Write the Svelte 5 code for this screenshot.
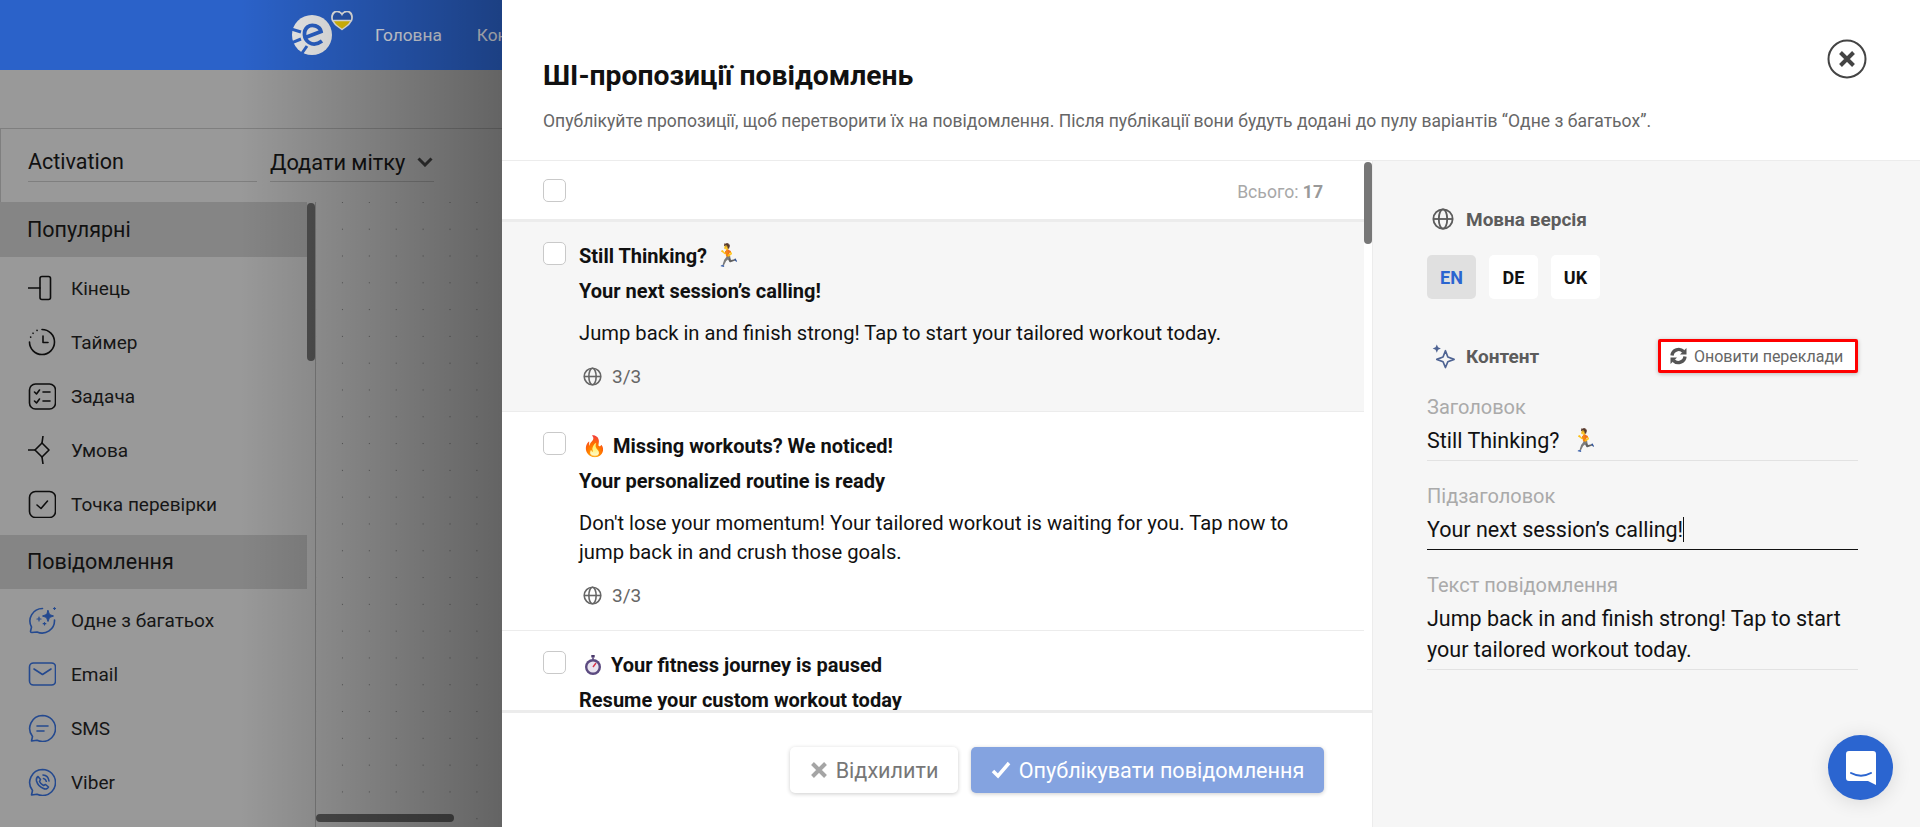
<script>
	const popular = [
		{ icon: 'end', label: 'Кінець' },
		{ icon: 'timer', label: 'Таймер' },
		{ icon: 'task', label: 'Задача' },
		{ icon: 'cond', label: 'Умова' },
		{ icon: 'check', label: 'Точка перевірки' }
	];
	const messages = [
		{ icon: 'ai', label: 'Одне з багатьох' },
		{ icon: 'mail', label: 'Email' },
		{ icon: 'sms', label: 'SMS' },
		{ icon: 'viber', label: 'Viber' },
		{ icon: 'push', label: '' }
	];
	const suggestions = [
		{
			title: 'Still Thinking?',
			after: '🏃',
			sub: 'Your next session’s calling!',
			body: 'Jump back in and finish strong! Tap to start your tailored workout today.',
			active: true
		},
		{
			before: '🔥',
			title: 'Missing workouts? We noticed!',
			sub: 'Your personalized routine is ready',
			body: "Don't lose your momentum! Your tailored workout is waiting for you. Tap now to jump back in and crush those goals."
		},
		{
			stopwatch: true,
			title: 'Your fitness journey is paused',
			sub: 'Resume your custom workout today',
			body: 'Pick up where you left off.'
		}
	];
</script>

{#snippet globe(size)}
	<svg width={size} height={size} viewBox="0 0 24 24" fill="none" stroke="currentColor" stroke-width="2">
		<circle cx="12" cy="12" r="10.5" />
		<ellipse cx="12" cy="12" rx="4.6" ry="10.5" />
		<path d="M1.5 12h21" />
	</svg>
{/snippet}

{#snippet navIcon(name)}
	<svg class="nav-icon" class:blue={['ai', 'mail', 'sms', 'viber', 'push'].includes(name)} viewBox="0 0 28 28" fill="none" stroke="currentColor" stroke-width="1.6" stroke-linecap="round" stroke-linejoin="round">
		{#if name === 'end'}
			<path d="M0 14h12" />
			<rect x="12" y="2.5" width="10.5" height="23" rx="2" />
		{:else if name === 'timer'}
			<path d="M14 1.5a12.5 12.5 0 1 1-12.5 12.5" />
			<path d="M5 5.2l.1.1M2.6 9l.1.1M9 2.4l.1.1" />
			<path d="M15 8v6.5h5" />
		{:else if name === 'task'}
			<rect x="1.5" y="2" width="26" height="25" rx="6" />
			<path d="M6.500 10l2 2 3-4M15 10h7M6.500 19l2 2 3-4M15 19h7" />
		{:else if name === 'cond'}
			<path d="M0 14h7M15 0l-1 7M15 28l-1-7" />
			<path d="M14 7l7 7-7 7-7-7z" />
		{:else if name === 'check'}
			<rect x="1.500" y="1.500" width="26" height="26" rx="6" />
			<path d="M9 15l4 3.500 6.500-7.500" />
		{:else if name === 'ai'}
			<path d="M14.500 2.500A12.500 12.500 0 0 0 3.500 21l-1 4.500c0 .8.500 1 1.200 1L9 26A12.500 12.500 0 0 0 26.500 14" />
			<path d="M20 4.500l1.500 4 4 1.500-4 1.500-1.500 4-1.500-4-4-1.500 4-1.500z" fill="currentColor" stroke-width="1" />
			<path d="M11 11v4M9 13h4M16.500 16.500v2.500M15.200 17.700h2.600M26.500 1.500v2M25.500 2.500h2" stroke-width="1.200" />
		{:else if name === 'mail'}
			<rect x="1.500" y="3" width="26" height="22" rx="4" />
			<path d="M6 9l8.500 5.500L23 9" />
		{:else if name === 'sms'}
			<path d="M14.500 1.500a13 13 0 0 1 0 26c-2 0-3.800-.4-5.500-1.200l-5.500.7 1-4.500A13 13 0 0 1 14.500 1.500z" />
			<path d="M9 12h11M9 17h7" />
		{:else if name === 'viber'}
			<path d="M14.500 1.500a13 13 0 0 1 0 26c-2 0-3.800-.4-5.500-1.200l-5.500.7 1-4.500A13 13 0 0 1 14.500 1.500z" />
			<path d="M10 8.500l2.500 3-1 2c.8 1.800 2.200 3.200 4 4l2-1 3 2.500c-1 2-3 2.500-5 1.500-3.500-1.500-6-4-7-7.500-.4-2 .3-3.600 1.500-4.500z" />
			<path d="M15 7c3 .2 5.500 2.600 6 6M15.500 10.500c1.500.3 2.500 1.300 2.800 2.800" />
		{:else}
			<path d="M2 27v-8a5 5 0 0 1 5-5h13a5 5 0 0 1 5 5v8" />
		{/if}
	</svg>
{/snippet}

<div class="page">
	<aside class="backdrop">
		<header class="topbar">
			<svg class="logo" width="64" height="48" viewBox="0 0 64 48">
				<circle cx="21" cy="24" r="20" fill="#eee" />
				<path d="M0 18l10 3M0 32l10-4M9 45l7-10" fill="none" stroke="#2b62c9" stroke-width="3" />
				<path d="M13 27L30 20.500C29 15 21 12.500 16.500 16C12 20 12.500 28 18 31.500C22 34 27 33 31 30" fill="none" stroke="#2b62c9" stroke-width="3.800" />
				<g transform="translate(0 -1.500)">
					<path d="M51 20c-6-4-10-7-10-12.500 0-3.500 2-5.500 5-5.500 2 0 4 1 5 3 1-2 3-3 5-3 3 0 5 2 5 5.500C61 13 57 16 51 20z" fill="#e4c40a" stroke="#eee" stroke-width="1.500" />
					<path d="M41.500 11c-1.500-5 1.500-9 4.500-9 2 0 4 1 5 3 1-2 3-3 5-3 3 0 6 4 4.500 9z" fill="#2a59b4" stroke="#eee" stroke-width="1.500" />
				</g>
			</svg>
			<nav class="topnav">
				<span>Головна</span>
				<span>Контакти</span>
			</nav>
		</header>

		<div class="spacer"></div>

		<div class="name-row">
			<div class="name-field">Activation</div>
			<div class="tag-field">
				Додати мітку
				<svg width="16" height="10" viewBox="0 0 16 10" fill="none" stroke="#333" stroke-width="3"><path d="M1.500 1.500L8 8l6.500-6.500" /></svg>
			</div>
		</div>

		<div class="workspace">
			<div class="palette">
				<div class="group-title">Популярні</div>
				{#each popular as item}
					<div class="palette-item">
						{@render navIcon(item.icon)}
						<span>{item.label}</span>
					</div>
				{/each}
				<div class="group-title second">Повідомлення</div>
				{#each messages as item}
					<div class="palette-item">
						{@render navIcon(item.icon)}
						<span>{item.label}</span>
					</div>
				{/each}
			</div>
			<div class="palette-scroll"><div class="thumb"></div></div>
			<div class="canvas"><div class="hscroll"></div></div>
		</div>
	</aside>

	<section class="modal">
		<div class="modal-head">
			<h1>ШІ-пропозиції повідомлень</h1>
			<p>Опублікуйте пропозиції, щоб перетворити їх на повідомлення. Після публікації вони будуть додані до пулу варіантів “Одне з багатьох”.</p>
			<button class="close" aria-label="Закрити">
				<svg width="40" height="40" viewBox="0 0 40 40" fill="none" stroke="#444">
					<circle cx="20" cy="20" r="18.500" stroke-width="2" />
					<path d="M13.500 13.500l13 13M26.500 13.500l-13 13" stroke-width="4" />
				</svg>
			</button>
		</div>

		<div class="modal-body">
			<div class="left">
				<div class="list-wrap">
					<div class="list">
						<div class="toolbar">
							<span class="box"></span>
							<span class="total">Всього: <b>17</b></span>
						</div>
						{#each suggestions as s}
							<article class="item" class:active={s.active}>
								<span class="box"></span>
								<div class="item-text">
									<div class="item-title">
										{#if s.before}<span class="emoji before">{s.before}</span>{/if}
										{#if s.stopwatch}
											<svg class="stopwatch" width="16" height="20" viewBox="0 0 16 20">
												<rect x="6.300" y="0" width="3.400" height="2.500" fill="#4b3a6b" />
												<rect x="7" y="2" width="2" height="2.500" fill="#7a6a96" />
												<circle cx="8" cy="12" r="8" fill="#5b4a80" />
												<circle cx="8" cy="12" r="5.600" fill="#e9e4ef" />
												<path d="M8 12l3-4" stroke="#d8344a" stroke-width="1.400" />
											</svg>
										{/if}
										{s.title}
										{#if s.after}<span class="emoji after">{s.after}</span>{/if}
									</div>
									<div class="item-sub">{s.sub}</div>
									<div class="item-body">{s.body}</div>
									<div class="item-meta">
										{@render globe(19)}
										<span>3/3</span>
									</div>
								</div>
							</article>
						{/each}
					</div>
					<div class="list-thumb"></div>
				</div>
				<footer class="actions">
					<button class="btn reject">
						<svg width="18" height="18" viewBox="0 0 18 18" stroke="#a5a5a5" stroke-width="4"><path d="M2.500 2.500l13 13M15.500 2.500l-13 13" /></svg>
						Відхилити
					</button>
					<button class="btn publish">
						<svg width="20" height="18" viewBox="0 0 20 18" fill="none" stroke="#fff" stroke-width="3.500"><path d="M2 10l5 5L18 2" /></svg>
						Опублікувати повідомлення
					</button>
				</footer>
			</div>

			<div class="right">
				<div class="section-title lang-title">
					{@render globe(22)}
					<span>Мовна версія</span>
				</div>
				<div class="langs">
					<span class="lang current">EN</span>
					<span class="lang">DE</span>
					<span class="lang">UK</span>
				</div>
				<div class="content-row">
					<div class="section-title">
						<svg class="spark" width="24" height="26" viewBox="0 0 25 26" fill="none" stroke="#4f6493" stroke-width="1.800" stroke-linejoin="round">
							<path d="M14 7.500l2.500 6.500 6.500 2.500-6.500 2.500L14 25l-2.500-6-6.500-2.500 6.500-2.500z" />
							<path d="M5 1l1.300 3 3 1.300-3 1.300L5 9.500 3.700 6.600l-3-1.300 3-1.300z" fill="#4f6493" stroke="none" />
						</svg>
						<span>Контент</span>
					</div>
					<button class="refresh">
						<svg width="17" height="18" viewBox="0 0 17 18" fill="#555">
							<path d="M2 8.500A6.700 6.700 0 0 1 13.500 4.500" fill="none" stroke="#555" stroke-width="3.400" />
							<path d="M15 9.500A6.700 6.700 0 0 1 3.500 13.500" fill="none" stroke="#555" stroke-width="3.400" />
							<path d="M16.500 1v6.500H10z" />
							<path d="M.5 17v-6.500H7z" />
						</svg>
						Оновити переклади
					</button>
				</div>
				<div class="field">
					<div class="field-label">Заголовок</div>
					<div class="field-value">Still Thinking? <span class="emoji after">🏃</span></div>
				</div>
				<div class="field focused">
					<div class="field-label">Підзаголовок</div>
					<div class="field-value">Your next session’s calling!<i class="caret"></i></div>
				</div>
				<div class="field">
					<div class="field-label">Текст повідомлення</div>
					<div class="field-value">Jump back in and finish strong! Tap to start your tailored workout today.</div>
				</div>
			</div>
		</div>
	</section>

	<button class="chat" aria-label="Чат">
		<svg width="30" height="34" viewBox="0 0 30 34">
			<path d="M3 0h24a3 3 0 0 1 3 3v31l-8-4H3a3 3 0 0 1-3-3V3a3 3 0 0 1 3-3z" fill="#fff" />
			<path d="M5 22c6 3.500 14 3.500 20 0" fill="none" stroke="#2b65d0" stroke-width="2" stroke-linecap="round" />
		</svg>
	</button>
</div>

<style>
	:global(body) {
		margin: 0;
		background: #fff;
	}

	.page {
		position: relative;
		display: flex;
		height: 827px;
		overflow: hidden;
		font-family: Roboto, "Liberation Sans", sans-serif;
		color: #111;
	}

	.backdrop {
		position: relative;
		display: flex;
		flex-direction: column;
		width: 502px;
		flex-shrink: 0;
		overflow: hidden;
		background: #999;
	}

	.backdrop::after {
		content: '';
		position: absolute;
		inset: 0;
		background: linear-gradient(90deg, rgba(0, 0, 0, 0) 240px, rgba(0, 0, 0, 0.35) 100%);
		pointer-events: none;
	}

	.topbar {
		display: flex;
		align-items: center;
		height: 70px;
		padding-left: 291px;
		box-sizing: border-box;
		background: #2b62c9;
		flex-shrink: 0;
	}

	.logo {
		margin-right: 20px;
		flex-shrink: 0;
	}

	.topnav {
		display: flex;
		gap: 35px;
		font-size: 17.3px;
		color: #e4e8f2;
		white-space: nowrap;
	}

	.spacer {
		height: 58px;
		flex-shrink: 0;
	}

	.name-row {
		display: flex;
		gap: 13px;
		height: 74px;
		padding: 0 0 0 28px;
		box-sizing: border-box;
		border-top: 1px solid #7f7f7f;
		border-left: 1px solid #7f7f7f;
		font-size: 21.5px;
		flex-shrink: 0;
	}

	.name-field,
	.tag-field {
		height: 53px;
		line-height: 66px;
		border-bottom: 1px solid #7f7f7f;
		box-sizing: border-box;
	}

	.name-field {
		width: 229px;
		margin-left: -1px;
	}

	.tag-field {
		display: flex;
		align-items: center;
		gap: 12px;
		width: 164px;
		white-space: nowrap;
		padding-top: 14px;
		line-height: normal;
		font-size: 21.8px;
	}

	.workspace {
		display: flex;
		flex: 1;
		min-height: 0;
	}

	.palette {
		width: 307px;
		flex-shrink: 0;
	}

	.group-title {
		height: 55px;
		line-height: 55px;
		padding-left: 27px;
		margin-bottom: 4px;
		font-size: 21.5px;
		background: #858585;
	}

	.group-title.second {
		height: 54px;
		line-height: 54px;
		margin-top: 4px;
	}

	.palette-item {
		display: flex;
		align-items: center;
		gap: 15px;
		height: 54px;
		padding-left: 28px;
		font-size: 19px;
		color: #161616;
	}

	.nav-icon {
		width: 28px;
		height: 28px;
		flex-shrink: 0;
		color: #0d0d0d;
	}

	.nav-icon.blue {
		color: #24498f;
	}

	.palette-scroll {
		width: 8px;
		flex-shrink: 0;
	}

	.thumb {
		height: 158px;
		margin-top: 1px;
		border-radius: 4px;
		background: #4f4f4f;
	}

	.canvas {
		position: relative;
		flex: 1;
		border-left: 1px solid #7a7a7a;
		background-color: #999;
		background-image: radial-gradient(circle, #5a5a5a 0.8px, transparent 1px);
		background-size: 26.9px 26.8px;
		background-position: 13px -13px;
	}

	.hscroll {
		position: absolute;
		left: 0;
		bottom: 5px;
		width: 138px;
		height: 8px;
		border-radius: 4px;
		background: #4a4a4a;
	}

	.modal {
		display: flex;
		flex-direction: column;
		flex: 1;
		min-width: 0;
		background: #fff;
	}

	.modal-head {
		position: relative;
		height: 161px;
		box-sizing: border-box;
		padding: 58px 0 0 41px;
		border-bottom: 1px solid #ececec;
		flex-shrink: 0;
	}

	h1 {
		margin: 0;
		font-size: 28.3px;
		line-height: 36px;
		font-weight: 700;
		color: #111;
	}

	.modal-head p {
		margin: 17px 0 0;
		font-size: 17.55px;
		line-height: 20px;
		color: #666;
		white-space: nowrap;
	}

	.close {
		position: absolute;
		top: 39px;
		right: 53px;
		width: 40px;
		height: 40px;
		padding: 0;
		border: none;
		background: none;
	}

	.modal-body {
		display: flex;
		flex: 1;
		min-height: 0;
	}

	.left {
		display: flex;
		flex-direction: column;
		width: 870px;
		flex-shrink: 0;
		border-right: 1px solid #ececec;
	}

	.list-wrap {
		position: relative;
		height: 549px;
		overflow: hidden;
		flex-shrink: 0;
		border-bottom: 3px solid #ececec;
	}

	.list {
		padding-right: 8px;
	}

	.list-thumb {
		position: absolute;
		top: 1px;
		right: 0;
		width: 8px;
		height: 82px;
		border-radius: 4px;
		background: #777;
	}

	.toolbar {
		display: flex;
		align-items: center;
		justify-content: space-between;
		height: 58px;
		padding: 0 41px;
		border-bottom: 3px solid #ececec;
	}

	.total {
		margin-top: 3px;
		font-size: 17.6px;
		color: #a8a8a8;
	}

	.total b {
		font-weight: 700;
		color: #999;
	}

	.box {
		display: block;
		width: 23px;
		height: 23px;
		box-sizing: border-box;
		border: 1px solid #c9c9c9;
		border-radius: 5px;
		background: #fff;
		flex-shrink: 0;
	}

	.item {
		display: flex;
		gap: 13px;
		padding: 20px 41px 0;
		border-bottom: 1px solid #ececec;
	}

	.item.active {
		background: #f6f6f6;
	}

	.item-text {
		flex: 1;
		min-width: 0;
		padding-top: 1px;
		padding-bottom: 20px;
	}

	.item.active .item-text {
		padding-bottom: 19px;
	}

	.item-title {
		display: flex;
		align-items: center;
		font-size: 20px;
		line-height: 26px;
		font-weight: 700;
	}

	.item-sub {
		margin-top: 9px;
		font-size: 20px;
		line-height: 26px;
		font-weight: 700;
	}

	.item-body {
		margin-top: 15px;
		font-size: 20.2px;
		line-height: 29px;
	}

	.item-meta {
		display: flex;
		align-items: center;
		gap: 10px;
		margin-top: 13.500px;
		padding-left: 4px;
		height: 30px;
		font-size: 19px;
		color: #666;
	}

	.emoji {
		font-family: "Noto Color Emoji", sans-serif;
		font-weight: 400;
		font-size: 20px;
		line-height: 1;
	}

	.emoji.before {
		margin: 0 6px 0 3px;
	}

	.emoji.after {
		margin-left: 7px;
		font-size: 22px;
	}

	.stopwatch {
		margin: 0 10px 0 6px;
		flex-shrink: 0;
	}

	.actions {
		display: flex;
		justify-content: flex-end;
		gap: 13px;
		padding: 34px 48px 0 0;
	}

	.btn {
		display: flex;
		align-items: center;
		justify-content: center;
		gap: 8px;
		height: 46px;
		padding: 0;
		border: none;
		border-radius: 5px;
		font-family: inherit;
		font-size: 21.6px;
		box-shadow: 0 1px 4px rgba(0, 0, 0, 0.2);
	}

	.reject {
		width: 168px;
		background: #fff;
		color: #777;
	}

	.publish {
		width: 353px;
		background: #84a3e0;
		color: #fff;
	}

	.right {
		flex: 1;
		min-width: 0;
		padding: 0 62px 0 54px;
		background: #f6f6f6;
	}

	.section-title {
		display: flex;
		align-items: center;
		gap: 12px;
		padding-left: 5px;
		font-size: 19px;
		font-weight: 700;
		color: #5c5c5c;
	}

	.spark {
		margin-right: -2px;
	}

	.lang-title {
		margin-top: 46px;
		height: 24px;
	}

	.langs {
		display: flex;
		gap: 13px;
		margin-top: 24px;
	}

	.lang {
		display: flex;
		align-items: center;
		justify-content: center;
		width: 49px;
		height: 44px;
		border-radius: 5px;
		background: #fff;
		font-size: 18px;
		font-weight: 700;
	}

	.lang.current {
		background: #e0e0e0;
		color: #2b65d0;
	}

	.content-row {
		display: flex;
		align-items: center;
		justify-content: space-between;
		margin-top: 40px;
		height: 34px;
	}

	.refresh {
		display: flex;
		align-items: center;
		gap: 7px;
		width: 200px;
		height: 34px;
		padding: 0 0 0 9px;
		border: 3px solid #f00;
		border-radius: 2px;
		background: #fff;
		font-family: inherit;
		font-size: 16px;
		color: #666;
		white-space: nowrap;
		box-shadow: 0 1px 4px rgba(0, 0, 0, 0.25);
	}

	.field {
		padding-bottom: 4px;
		border-bottom: 1px solid #e2e2e2;
		margin-top: 23px;
	}

	.content-row + .field {
		margin-top: 22px;
	}

	.field.focused {
		border-bottom-color: #111;
	}

	.field-label {
		font-size: 20px;
		line-height: 24px;
		color: #aaa;
	}

	.field-value {
		margin-top: 6px;
		font-size: 21.5px;
		line-height: 31px;
		color: #111;
	}

	.caret {
		display: inline-block;
		width: 1px;
		height: 25px;
		background: #111;
		vertical-align: -5px;
	}

	.chat {
		position: absolute;
		left: 1828px;
		top: 735px;
		display: flex;
		align-items: center;
		justify-content: center;
		width: 65px;
		height: 65px;
		padding: 0;
		border: none;
		border-radius: 50%;
		background: #2b65d0;
		box-shadow: 0 2px 20px rgba(0, 0, 0, 0.12);
	}
</style>
